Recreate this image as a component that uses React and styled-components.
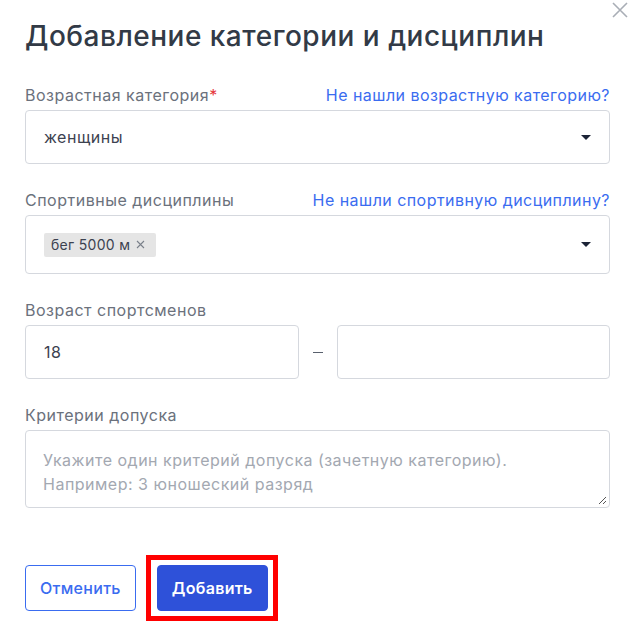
import React from 'react'
import styled, { createGlobalStyle } from 'styled-components'

const GlobalStyle = createGlobalStyle`
  html, body {
    margin: 0;
    padding: 0;
    background: #ffffff;
    font-family: Inter, "Noto Sans", sans-serif;
  }
  * { box-sizing: border-box; }
`

const StyledModal = styled.div`
  position: relative;
  width: 635px;
  height: 637px;
  padding: 16px 25px 0 25px;
  background: #ffffff;
`
const StyledClose = styled.button`
  position: absolute;
  top: 1px;
  right: 6px;
  width: 18px;
  height: 18px;
  padding: 0;
  border: none;
  background: none;
  cursor: pointer;
`
const StyledTitle = styled.h2`
  margin: 0 0 25px 0;
  font-size: 28px;
  line-height: 40px;
  font-weight: 500;
  color: #323a46;
  letter-spacing: 0.5px;
`
const StyledField = styled.div`
  margin-bottom: 22px;
`
const StyledLabelRow = styled.div`
  display: flex;
  justify-content: space-between;
  align-items: flex-end;
  height: 24px;
  margin-bottom: 5px;
`
const StyledLabel = styled.span`
  font-size: 16px;
  letter-spacing: 0.5px;
  color: #6b717c;
`
const StyledRequired = styled.span`
  color: #e5353b;
`
const StyledLink = styled.a`
  font-size: 16px;
  letter-spacing: 0.45px;
  color: #3a6cf0;
  text-decoration: none;
  cursor: pointer;
`
const StyledSelect = styled.div`
  display: flex;
  align-items: center;
  justify-content: space-between;
  height: ${p => p.height || 54}px;
  padding: 0 18px;
  border: 1px solid #d5d8de;
  border-radius: 4px;
  font-size: 16px;
  letter-spacing: 0.5px;
  color: #3c4250;
`
const StyledCaret = styled.span`
  width: 0;
  height: 0;
  border-left: 5px solid transparent;
  border-right: 5px solid transparent;
  border-top: 5px solid #1c2437;
`
const StyledTag = styled.span`
  display: inline-flex;
  align-items: center;
  gap: 6px;
  height: 24px;
  padding: 0 11px 0 7px;
  background: #e5e5e5;
  border-radius: 2px;
  font-size: 14px;
  letter-spacing: 0.3px;
  color: #3c4250;
`
const StyledRange = styled.div`
  display: flex;
  align-items: center;
  gap: 14px;
`
const StyledDash = styled.span`
  width: 10px;
  height: 1px;
  background: #59606d;
`
const StyledInput = styled.div`
  flex: 1;
  display: flex;
  align-items: center;
  height: 54px;
  padding: 0 18px;
  border: 1px solid #d5d8de;
  border-radius: 4px;
  font-size: 16px;
  letter-spacing: 0.5px;
  color: #3c4250;
`
const StyledTextarea = styled.div`
  position: relative;
  height: 78px;
  padding: 17px 17px;
  border: 1px solid #d5d8de;
  border-radius: 4px;
  font-size: 16px;
  line-height: 24px;
  letter-spacing: 0.5px;
  color: #a3a8b1;
`
const StyledGrip = styled.svg`
  position: absolute;
  right: 2px;
  bottom: 2px;
`
const StyledActions = styled.div`
  display: flex;
  align-items: center;
  gap: 10px;
  margin-top: 47px;
`
const StyledButton = styled.button`
  height: 46px;
  padding: 0 ${p => p.primary ? 14 : 14}px;
  border-radius: 4px;
  font-family: inherit;
  font-size: 16px;
  letter-spacing: 0.3px;
  font-weight: ${p => p.primary ? 600 : 500};
  cursor: pointer;
  border: 1px solid ${p => p.primary ? '#2e51d9' : '#3a6cf0'};
  background: ${p => p.primary ? '#2e51d9' : '#ffffff'};
  color: ${p => p.primary ? '#ffffff' : '#3a6cf0'};
`
const StyledHighlight = styled.div`
  padding: 5px 5px 5px 6px;
  border: 5px solid #ff0000;
`

const App = () => {
  return (
    <>
      <GlobalStyle />
      <StyledModal>
        <StyledClose aria-label="закрыть">
          <svg width="18" height="18" viewBox="0 0 18 18">
            <path d="M2 2 L16 16 M16 2 L2 16" stroke="#a9aeb6" strokeWidth="1.6" fill="none" />
          </svg>
        </StyledClose>
        <StyledTitle>Добавление категории и дисциплин</StyledTitle>

        <StyledField>
          <StyledLabelRow>
            <StyledLabel>Возрастная категория<StyledRequired>*</StyledRequired></StyledLabel>
            <StyledLink>Не нашли возрастную категорию?</StyledLink>
          </StyledLabelRow>
          <StyledSelect>
            <span>женщины</span>
            <StyledCaret />
          </StyledSelect>
        </StyledField>

        <StyledField>
          <StyledLabelRow>
            <StyledLabel>Спортивные дисциплины</StyledLabel>
            <StyledLink>Не нашли спортивную дисциплину?</StyledLink>
          </StyledLabelRow>
          <StyledSelect height={59}>
            <StyledTag>
              бег 5000 м
              <svg width="9" height="9" viewBox="0 0 9 9">
                <path d="M1 1 L8 8 M8 1 L1 8" stroke="#7a808a" strokeWidth="1.1" fill="none" />
              </svg>
            </StyledTag>
            <StyledCaret />
          </StyledSelect>
        </StyledField>

        <StyledField>
          <StyledLabelRow>
            <StyledLabel>Возраст спортсменов</StyledLabel>
          </StyledLabelRow>
          <StyledRange>
            <StyledInput>18</StyledInput>
            <StyledDash />
            <StyledInput />
          </StyledRange>
        </StyledField>

        <StyledField>
          <StyledLabelRow>
            <StyledLabel>Критерии допуска</StyledLabel>
          </StyledLabelRow>
          <StyledTextarea>
            Укажите один критерий допуска (зачетную категорию).<br />
            Например: 3 юношеский разряд
            <StyledGrip width="10" height="10" viewBox="0 0 10 10">
              <path d="M9 2 L2 9 M9 6 L6 9" stroke="#555" strokeWidth="1" />
            </StyledGrip>
          </StyledTextarea>
        </StyledField>

        <StyledActions>
          <StyledButton>Отменить</StyledButton>
          <StyledHighlight>
            <StyledButton primary>Добавить</StyledButton>
          </StyledHighlight>
        </StyledActions>
      </StyledModal>
    </>
  )
}

export default App
